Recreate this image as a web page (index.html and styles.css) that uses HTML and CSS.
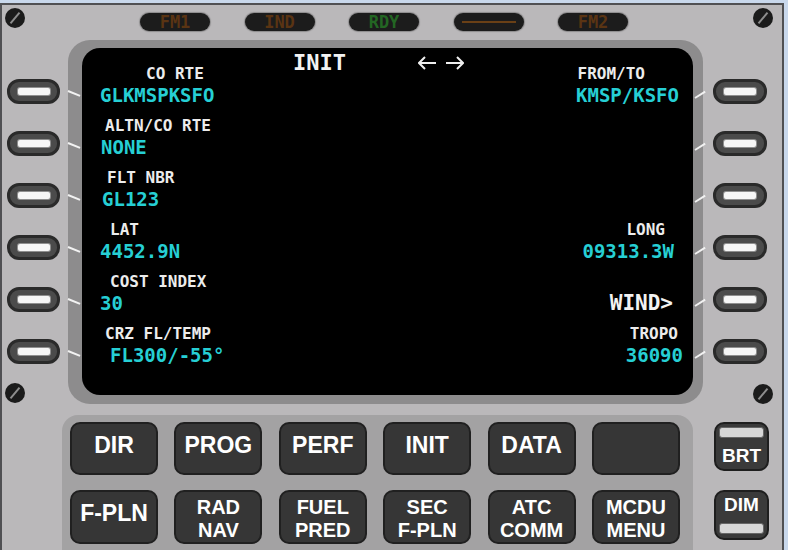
FILE: index.html
```html
<!DOCTYPE html>
<html>
<head>
<meta charset="utf-8">
<title>MCDU INIT</title>
<link rel="stylesheet" href="styles.css">
</head>
<body>
<div class="panel">
  <span class="screw s-tl"></span>
  <span class="screw s-tr"></span>
  <span class="screw s-bl"></span>
  <span class="screw s-br"></span>

  <div class="lights">
    <div class="light amber">FM1</div>
    <div class="light amber">IND</div>
    <div class="light green">RDY</div>
    <div class="light"><span class="dash"></span></div>
    <div class="light amber">FM2</div>
  </div>

  <div class="middle">
    <div class="lsk-col left">
      <div class="lsk"><span class="bar"></span></div>
      <div class="lsk"><span class="bar"></span></div>
      <div class="lsk"><span class="bar"></span></div>
      <div class="lsk"><span class="bar"></span></div>
      <div class="lsk"><span class="bar"></span></div>
      <div class="lsk"><span class="bar"></span></div>
    </div>

    <div class="bezel">
      <div class="screen">
        <div class="title-row">
          <span class="title">INIT</span>
          <svg class="arrows" viewBox="0 0 46 14"><path d="M1 7H18M7 1L1 7L7 13M28 7H45M39 1L45 7L39 13" stroke="#eeeeee" stroke-width="2" fill="none"/></svg>
        </div>

        <div class="row">
          <div class="lbl in64">CO RTE</div>
          <div class="lbl r pr48">FROM/TO</div>
          <div class="dat in18">GLKMSPKSFO</div>
          <div class="dat r pr14">KMSP/KSFO</div>
        </div>
        <div class="row">
          <div class="lbl in23">ALTN/CO RTE</div>
          <div class="lbl r"></div>
          <div class="dat in19">NONE</div>
          <div class="dat r"></div>
        </div>
        <div class="row">
          <div class="lbl in25">FLT NBR</div>
          <div class="lbl r"></div>
          <div class="dat in20">GL123</div>
          <div class="dat r"></div>
        </div>
        <div class="row">
          <div class="lbl in28">LAT</div>
          <div class="lbl r pr28">LONG</div>
          <div class="dat in18">4452.9N</div>
          <div class="dat r pr19">09313.3W</div>
        </div>
        <div class="row">
          <div class="lbl in28">COST INDEX</div>
          <div class="lbl r"></div>
          <div class="dat in18">30</div>
          <div class="dat r pr20 wind">WIND&gt;</div>
        </div>
        <div class="row">
          <div class="lbl in23">CRZ FL/TEMP</div>
          <div class="lbl r pr15">TROPO</div>
          <div class="dat in28">FL300/-55°</div>
          <div class="dat r pr10">36090</div>
        </div>
      </div>
    </div>

    <div class="lsk-col right">
      <div class="lsk"><span class="bar"></span></div>
      <div class="lsk"><span class="bar"></span></div>
      <div class="lsk"><span class="bar"></span></div>
      <div class="lsk"><span class="bar"></span></div>
      <div class="lsk"><span class="bar"></span></div>
      <div class="lsk"><span class="bar"></span></div>
    </div>
  </div>

  <div class="bottom">
    <div class="keypad">
      <div class="key">DIR</div>
      <div class="key">PROG</div>
      <div class="key">PERF</div>
      <div class="key">INIT</div>
      <div class="key">DATA</div>
      <div class="key"></div>
      <div class="key">F-PLN</div>
      <div class="key two">RAD<br>NAV</div>
      <div class="key two">FUEL<br>PRED</div>
      <div class="key two">SEC<br>F-PLN</div>
      <div class="key two">ATC<br>COMM</div>
      <div class="key two">MCDU<br>MENU</div>
    </div>
    <div class="bd-col">
      <div class="bd brt"><span class="bdbar"></span><span class="bdtext">BRT</span></div>
      <div class="bd dim"><span class="bdtext">DIM</span><span class="bdbar"></span></div>
    </div>
  </div>
</div>
</body>
</html>
```
FILE: styles.css
```css
* { box-sizing: border-box; }

html, body {
  margin: 0;
  padding: 0;
}

body {
  width: 788px;
  height: 550px;
  overflow: hidden;
  background: #c9d8ec;
  font-family: "Liberation Sans", Arial, sans-serif;
}

.panel {
  position: relative;
  width: 784px;
  height: 547px;
  margin-top: 3px;
  background: #bab8ba;
  border: 2px solid #505053;
  border-bottom: none;
}

/* screws */
.screw {
  position: absolute;
  width: 20px;
  height: 20px;
  border-radius: 50%;
  background: #1b1b1b;
}
.screw::after {
  content: "";
  position: absolute;
  left: 3px;
  top: 9px;
  width: 14px;
  height: 2px;
  background: #8d8d8d;
  transform: rotate(-50deg);
}
.s-tl { left: 3px; top: 3px; }
.s-tr { left: 751px; top: 3px; }
.s-bl { left: 3px; top: 378px; }
.s-br { left: 751px; top: 379px; }

/* annunciator lights */
.lights {
  display: flex;
  gap: 34.5px;
  height: 18px;
  margin-top: 8px;
  padding-left: 138px;
}
.light {
  width: 70px;
  height: 18px;
  border-radius: 9px;
  background: #1c1c1c;
  box-shadow: 0 0 1px 1px rgba(0, 0, 0, 0.25);
  display: flex;
  align-items: center;
  justify-content: center;
  font-family: "DejaVu Sans Mono", monospace;
  font-weight: bold;
  font-size: 17px;
  line-height: 18px;
}
.amber { color: #5a3413; }
.green { color: #236623; }
.dash {
  width: 54px;
  height: 2px;
  background: #6a4016;
}

/* middle: line select keys + screen */
.middle {
  display: flex;
  height: 364px;
  margin-top: 9px;
  padding-left: 5px;
}
.lsk-col {
  width: 53px;
  display: flex;
  flex-direction: column;
  gap: 27px;
  padding-top: 39px;
}
.lsk-col.right {
  width: 54px;
  margin-left: 10px;
}
.lsk {
  position: relative;
  height: 25px;
  border-radius: 12px;
  background: #4b4b4b;
  border: 3px solid #2a2a2a;
  display: flex;
  align-items: center;
  justify-content: center;
}
.lsk .bar {
  width: 32px;
  height: 7px;
  border-radius: 2px;
  background: #f6f6f6;
  box-shadow: 0 0 0 1px #8f8f8f;
}
.left .lsk::after {
  content: "";
  position: absolute;
  left: 58px;
  top: 8px;
  width: 13px;
  height: 2px;
  background: #f2f2f2;
  transform-origin: 0 50%;
  transform: rotate(22deg);
}
.right .lsk::after {
  content: "";
  position: absolute;
  left: -21px;
  top: 15px;
  width: 12px;
  height: 2px;
  background: #f2f2f2;
  transform-origin: 0 50%;
  transform: rotate(-32deg);
}

.bezel {
  width: 635px;
  margin-left: 8px;
  padding: 8px 10px 9px 14px;
  border-radius: 22px;
  background: #8d8c8d;
}
.screen {
  height: 100%;
  padding-top: 4px;
  border-radius: 18px;
  background: #000;
  font-family: "DejaVu Sans Mono", monospace;
  font-weight: bold;
}

.title-row {
  display: flex;
  align-items: center;
  height: 22px;
  margin-bottom: -10px;
  padding-left: 211px;
}
.title {
  font-size: 22px;
  line-height: 22px;
  color: #f2f2f2;
}
.arrows {
  width: 46px;
  height: 14px;
  margin-left: 72px;
}

.row {
  display: grid;
  grid-template-columns: 1fr 1fr;
  grid-template-rows: 20px 22px;
  margin-bottom: 10px;
}
.lbl {
  font-size: 16px;
  line-height: 20px;
  color: #ececec;
  white-space: pre;
}
.dat {
  font-size: 19px;
  line-height: 22px;
  color: #26cfd4;
  white-space: pre;
}
.wind {
  color: #f2f2f2;
  font-size: 21px;
}
.r { text-align: right; }

.in18 { padding-left: 18px; }
.in19 { padding-left: 19px; }
.in20 { padding-left: 20px; }
.in23 { padding-left: 23px; }
.in25 { padding-left: 25px; }
.in28 { padding-left: 28px; }
.in64 { padding-left: 64px; }
.pr10 { padding-right: 10px; }
.pr14 { padding-right: 14px; }
.pr15 { padding-right: 15px; }
.pr19 { padding-right: 19px; }
.pr20 { padding-right: 20px; }
.pr28 { padding-right: 28px; }
.pr48 { padding-right: 48px; }

/* bottom keypad */
.bottom {
  display: flex;
  margin-top: 11px;
  padding-left: 60px;
}
.keypad {
  width: 631px;
  height: 140px;
  padding: 7px 13px 0 8px;
  border-radius: 16px 16px 0 0;
  background: #a3a2a3;
  display: grid;
  grid-template-columns: repeat(6, 88px);
  grid-template-rows: 53px 54px;
  column-gap: 16.4px;
  row-gap: 15px;
  align-content: start;
}
.key {
  display: flex;
  align-items: center;
  justify-content: center;
  text-align: center;
  padding-bottom: 7px;
  border: 2px solid #202020;
  border-radius: 10px;
  background: #363636;
  color: #ffffff;
  font-weight: bold;
  font-size: 23px;
}
.key.two {
  padding-bottom: 0;
  padding-top: 4px;
  font-size: 20px;
  line-height: 23px;
}

.bd-col {
  width: 55px;
  margin-left: 21px;
  padding-top: 7px;
  display: flex;
  flex-direction: column;
  gap: 19px;
}
.bd {
  height: 49px;
  border: 2px solid #1e1e1e;
  border-radius: 10px;
  background: #3a3a3a;
  display: flex;
  flex-direction: column;
  align-items: center;
  color: #ffffff;
  font-weight: bold;
  font-size: 19px;
}
.bd.dim { height: 50px; }
.bdtext { line-height: 20px; }
.bdbar {
  width: 45px;
  height: 11px;
  border: 1px solid #666;
  border-radius: 3px;
  background: #d7d7d7;
}
.brt .bdbar { margin-top: 3px; }
.brt .bdtext { margin-top: 8px; }
.dim .bdtext { margin-top: 3px; }
.dim .bdbar { margin-top: 8px; }
```
